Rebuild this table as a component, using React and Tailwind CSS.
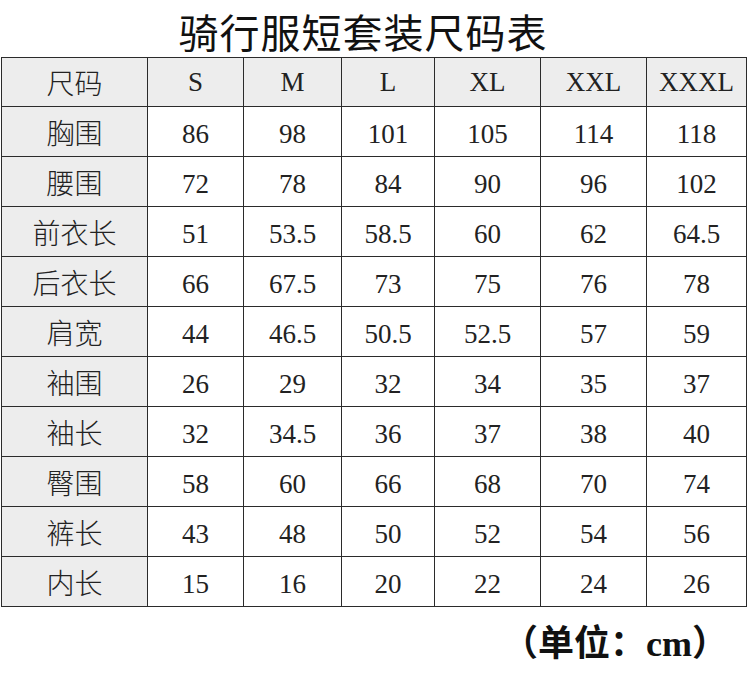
import React from 'react';

const sizes = ['S', 'M', 'L', 'XL', 'XXL', 'XXXL'];

const rows = [
    ['胸围', '86', '98', '101', '105', '114', '118'],
    ['腰围', '72', '78', '84', '90', '96', '102'],
    ['前衣长', '51', '53.5', '58.5', '60', '62', '64.5'],
    ['后衣长', '66', '67.5', '73', '75', '76', '78'],
    ['肩宽', '44', '46.5', '50.5', '52.5', '57', '59'],
    ['袖围', '26', '29', '32', '34', '35', '37'],
    ['袖长', '32', '34.5', '36', '37', '38', '40'],
    ['臀围', '58', '60', '66', '68', '70', '74'],
    ['裤长', '43', '48', '50', '52', '54', '56'],
    ['内长', '15', '16', '20', '22', '24', '26'],
];

const colWidths = ['w-[146px]', 'w-[96px]', 'w-[98px]', 'w-[93px]', 'w-[106px]', 'w-[106px]', 'w-[100px]'];

const cjk = "font-['Noto_Sans_CJK_SC',sans-serif]";
const serif = "font-['Liberation_Serif','Noto_Sans_CJK_SC',serif]";

const App = () => {
    return (
        <div className="w-[750px] h-[682px] bg-white overflow-hidden">
            {/* Title */}
            <h1 className={`${cjk} h-[57px] flex items-center justify-center pr-[24px] pt-[4px] text-[40px] font-normal text-[#111] tracking-[1px]`}>
                骑行服短套装尺码表
            </h1>

            {/* Size table */}
            <table className="ml-[1px] border-collapse table-fixed w-[746px]">
                <colgroup>
                    {colWidths.map((w, i) => (
                        <col key={i} className={w} />
                    ))}
                </colgroup>
                <thead>
                    <tr className="h-[49px] bg-[#ededed]">
                        <th className={`${cjk} border border-[#2b2b2b] text-[28px] font-light text-[#222] text-center`}>尺码</th>
                        {sizes.map((s) => (
                            <th key={s} className={`${serif} border border-[#2b2b2b] text-[27px] font-normal text-[#222] text-center`}>
                                {s}
                            </th>
                        ))}
                    </tr>
                </thead>
                <tbody>
                    {rows.map((r) => (
                        <tr key={r[0]} className="h-[50px]">
                            <td className={`${cjk} border border-[#2b2b2b] bg-[#ededed] text-[28px] font-light text-[#222] text-center`}>
                                {r[0]}
                            </td>
                            {r.slice(1).map((v, i) => (
                                <td key={i} className={`${serif} border border-[#2b2b2b] pt-[5px] text-[27px] text-[#222] text-center`}>
                                    {v}
                                </td>
                            ))}
                        </tr>
                    ))}
                </tbody>
            </table>

            {/* Unit note */}
            <div className="flex justify-end pr-[22px] pt-[10px]">
                <span className={`${serif} text-[36px] font-bold text-[#111]`}>（单位：cm）</span>
            </div>
        </div>
    );
};

export default App;
